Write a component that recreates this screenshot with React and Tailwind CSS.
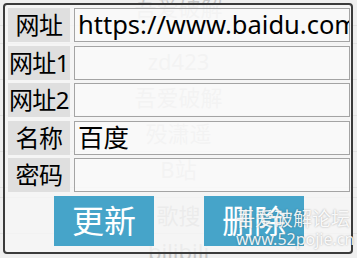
export default function App() {
  const bgRows = [
    { t: "吾爱破解", h: "h-[36px]" },
    { t: "", h: "h-[18px]" },
    { t: "zd423", h: "h-[36px]" },
    { t: "吾爱破解", h: "h-[36px]" },
    { t: "殁潇遥", h: "h-[36px]" },
    { t: "B站", h: "h-[36px]" },
    { t: "", h: "h-[10px]" },
    { t: "歌搜", h: "h-[36px]" },
    { t: "bilibili", h: "h-[36px]" },
  ];
  const fields = [
    { label: "网址", value: "https://www.baidu.com" },
    { label: "网址1", value: "" },
    { label: "网址2", value: "" },
    { label: "名称", value: "百度" },
    { label: "密码", value: "" },
  ];

  return (
    <div
      className="relative w-[357px] h-[258px] overflow-hidden bg-[#efefef]"
      style={{ fontFamily: '"Noto Sans", "Noto Sans CJK SC", sans-serif' }}
    >
      {/* list behind the dialog */}
      <div className="flex flex-col -mt-[10px]">
        {bgRows.map((r, i) => (
          <div
            key={i}
            className={`flex items-center justify-center border-b border-[#e2e2e2] text-[22px] text-[#c8c8c8] ${r.h}`}
          >
            {r.t}
          </div>
        ))}
      </div>

      {/* edit dialog */}
      <div className="absolute left-[3px] top-[3px] w-[350px] h-[251px] rounded-[4px] border-2 border-[#3b3b3b] bg-[#f7f7f7]/75 flex flex-col pl-[3px] pr-[1px] pt-[3px]">
        <div className="flex flex-col gap-[3.5px]">
          {fields.map((f) => (
            <div key={f.label} className="flex h-[34px] gap-[4px]">
              <div className="w-[62px] shrink-0 bg-[#dddddd]/90 flex items-center justify-center text-[24px] leading-none text-black tracking-[-0.5px] whitespace-nowrap">
                {f.label}
              </div>
              <div className="flex-1 min-w-0 overflow-hidden border border-[#a4a4a4] bg-white/40 flex items-center pl-[3px] text-[25.5px] leading-none text-black whitespace-nowrap">
                {f.value}
              </div>
            </div>
          ))}
        </div>
        <div className="flex gap-[50px] pl-[46px] mt-[4px]">
          <button className="w-[100px] h-[50px] bg-[#46a4c9] text-white text-[32px] leading-none">更新</button>
          <button className="w-[100px] h-[50px] bg-[#46a4c9] text-white text-[32px] leading-none">删除</button>
        </div>
      </div>

      {/* watermark */}
      <div className="absolute left-[236px] top-[207px] flex flex-col items-start text-white/90 [text-shadow:0_0_2px_rgba(0,0,0,0.35)]">
        <div className="text-[19px] leading-[24px]">吾爱破解论坛</div>
        <div className="text-[16px] leading-[18px] -mt-[1px]">www.52pojie.cn</div>
      </div>
    </div>
  );
}
